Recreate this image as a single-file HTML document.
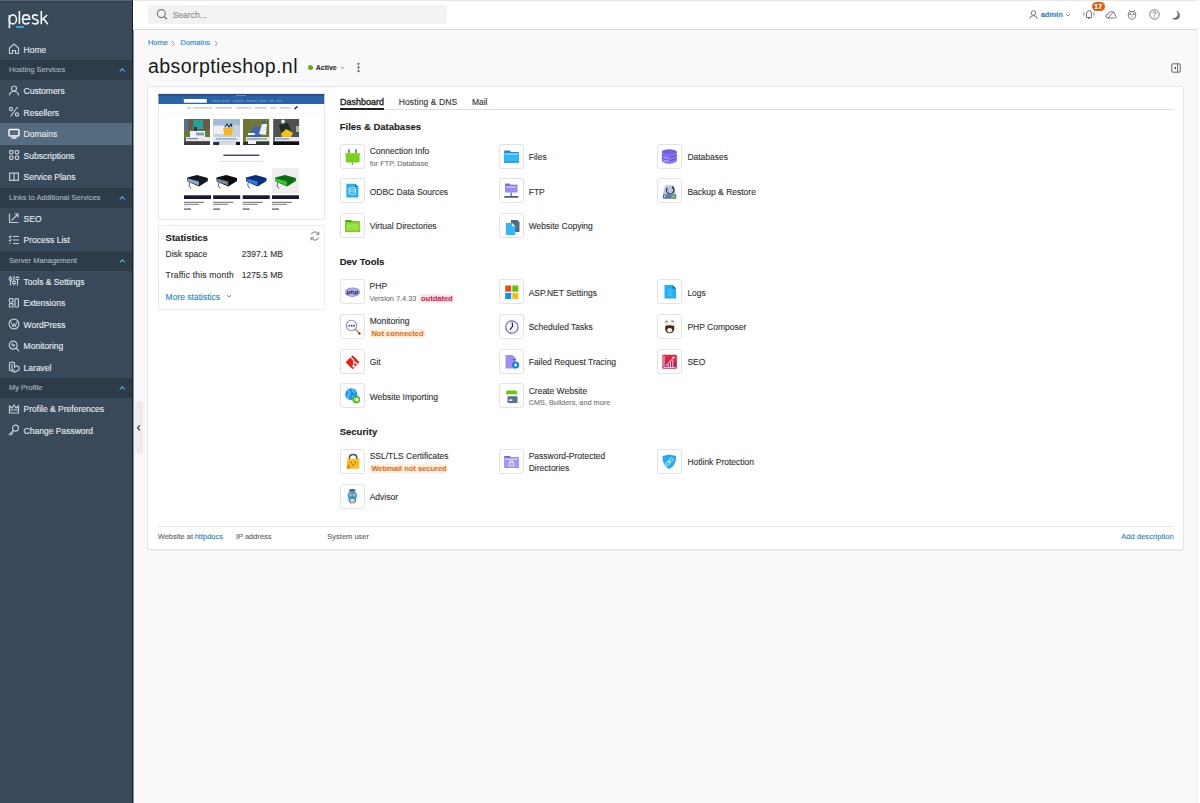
<!DOCTYPE html>
<html><head><meta charset="utf-8"><title>Plesk</title>
<style>
html,body{margin:0;padding:0;}
body{width:1200px;height:803px;overflow:hidden;position:relative;background:#f9f9f9;font-family:"Liberation Sans",sans-serif;}
.t{position:absolute;line-height:1;white-space:nowrap;-webkit-text-stroke:0.12px currentColor;}
.r{position:absolute;}
svg.r{overflow:visible;}
</style></head><body>
<div class="r" style="left:0px;top:0px;width:132px;height:803px;background:#384a5a"></div>
<div class="r" style="left:0px;top:0px;width:132px;height:1px;background:#55687a"></div>
<div class="r" style="left:132px;top:0px;width:1px;height:803px;background:#16222d"></div>
<div class="r" style="left:133px;top:0px;width:1px;height:803px;background:#8a939c"></div>
<div class="r" style="left:0px;top:1px;width:132px;height:1px;background:#2e3d4b"></div>
<svg class="r" style="left:0px;top:0px" width="60" height="32" viewBox="0 0 60 32"><g fill="none" stroke="#f4f6f8" stroke-width="1.6" stroke-linecap="butt"><path d="M9.4 15 V28.2"/><ellipse cx="12.9" cy="19.4" rx="3.6" ry="4.5"/><path d="M19.4 11 V24.2"/><path d="M22.6 19.3 H29.6 Q29.6 14.9 26.1 14.9 Q22.6 14.9 22.6 19.4 Q22.6 23.9 26.2 23.9 Q28.3 23.9 29.4 22.6"/><path d="M37.8 15.9 Q36.8 14.9 35 14.9 Q32.6 14.9 32.6 16.9 Q32.6 18.6 35.2 19.2 Q38.1 19.8 38.1 21.7 Q38.1 23.9 35.2 23.9 Q33.2 23.9 32.1 22.7"/><path d="M41.3 11 V24.2"/><path d="M47.2 15 L41.6 20.2 M43.4 18.6 L47.8 24.2"/></g></svg>
<div class="r" style="left:16px;top:26px;width:8px;height:1.6px;background:#36a9d8"></div>
<div class="t" style="left:23.60px;top:45.70px;font-size:8.5px;color:#e8ecef;">Home</div>
<div class="r" style="left:0px;top:60px;width:132px;height:20px;background:#2e3c4a"></div>
<div class="t" style="left:9.00px;top:66.45px;font-size:7.5px;color:#aab5bf;">Hosting Services</div>
<svg class="r" style="left:118.5px;top:68.3px" width="7" height="4" viewBox="0 0 7 4"><path d="M0.8 3.3 L3.3 0.9 L5.8 3.3" fill="none" stroke="#3fb5e6" stroke-width="1.15"/></svg>
<div class="t" style="left:23.60px;top:87.20px;font-size:8.5px;color:#e8ecef;">Customers</div>
<div class="t" style="left:23.60px;top:108.70px;font-size:8.5px;color:#e8ecef;">Resellers</div>
<div class="r" style="left:0px;top:123px;width:132px;height:21.5px;background:#556b80"></div>
<div class="t" style="left:23.60px;top:130.20px;font-size:8.5px;color:#e8ecef;">Domains</div>
<div class="t" style="left:23.60px;top:151.70px;font-size:8.5px;color:#e8ecef;">Subscriptions</div>
<div class="t" style="left:23.60px;top:173.20px;font-size:8.5px;color:#e8ecef;">Service Plans</div>
<div class="r" style="left:0px;top:187.5px;width:132px;height:20px;background:#2e3c4a"></div>
<div class="t" style="left:9.00px;top:193.95px;font-size:7.5px;color:#aab5bf;">Links to Additional Services</div>
<svg class="r" style="left:118.5px;top:195.8px" width="7" height="4" viewBox="0 0 7 4"><path d="M0.8 3.3 L3.3 0.9 L5.8 3.3" fill="none" stroke="#3fb5e6" stroke-width="1.15"/></svg>
<div class="t" style="left:23.60px;top:214.70px;font-size:8.5px;color:#e8ecef;">SEO</div>
<div class="t" style="left:23.60px;top:236.20px;font-size:8.5px;color:#e8ecef;">Process List</div>
<div class="r" style="left:0px;top:250.5px;width:132px;height:20px;background:#2e3c4a"></div>
<div class="t" style="left:9.00px;top:256.95px;font-size:7.5px;color:#aab5bf;">Server Management</div>
<svg class="r" style="left:118.5px;top:258.8px" width="7" height="4" viewBox="0 0 7 4"><path d="M0.8 3.3 L3.3 0.9 L5.8 3.3" fill="none" stroke="#3fb5e6" stroke-width="1.15"/></svg>
<div class="t" style="left:23.60px;top:277.70px;font-size:8.5px;color:#e8ecef;">Tools &amp; Settings</div>
<div class="t" style="left:23.60px;top:299.20px;font-size:8.5px;color:#e8ecef;">Extensions</div>
<div class="t" style="left:23.60px;top:320.70px;font-size:8.5px;color:#e8ecef;">WordPress</div>
<div class="t" style="left:23.60px;top:342.20px;font-size:8.5px;color:#e8ecef;">Monitoring</div>
<div class="t" style="left:23.60px;top:363.70px;font-size:8.5px;color:#e8ecef;">Laravel</div>
<div class="r" style="left:0px;top:378px;width:132px;height:20px;background:#2e3c4a"></div>
<div class="t" style="left:9.00px;top:384.45px;font-size:7.5px;color:#aab5bf;">My Profile</div>
<svg class="r" style="left:118.5px;top:386.3px" width="7" height="4" viewBox="0 0 7 4"><path d="M0.8 3.3 L3.3 0.9 L5.8 3.3" fill="none" stroke="#3fb5e6" stroke-width="1.15"/></svg>
<div class="t" style="left:23.60px;top:405.20px;font-size:8.5px;color:#e8ecef;">Profile &amp; Preferences</div>
<div class="t" style="left:23.60px;top:426.70px;font-size:8.5px;color:#e8ecef;">Change Password</div>
<svg class="r" style="left:8px;top:43.4px" width="12" height="12" viewBox="0 0 12 12"><path d="M1.5 10.5 V5 L6 1 L10.5 5 V10.5 H7.5 V7.5 H4.5 V10.5 Z" fill="none" stroke="#c3ccd4" stroke-width="1.2"/></svg>
<svg class="r" style="left:8px;top:84.9px" width="12" height="12" viewBox="0 0 12 12"><circle cx="6" cy="3.5" r="2.5" fill="none" stroke="#c3ccd4" stroke-width="1.2"/><path d="M1.5 10.5 Q1.5 6.5 6 6.5 Q10.5 6.5 10.5 10.5" fill="none" stroke="#c3ccd4" stroke-width="1.2"/></svg>
<svg class="r" style="left:8px;top:106.4px" width="12" height="12" viewBox="0 0 12 12"><circle cx="3" cy="3" r="1.6" fill="none" stroke="#c3ccd4" stroke-width="1.2"/><circle cx="9" cy="8.5" r="1.6" fill="none" stroke="#c3ccd4" stroke-width="1.2"/><path d="M9.5 1 L2.5 10.5" fill="none" stroke="#c3ccd4" stroke-width="1.2"/></svg>
<svg class="r" style="left:8px;top:127.9px" width="12" height="12" viewBox="0 0 12 12"><rect x="1" y="1.5" width="10" height="6.5" rx="1" fill="none" stroke="#ffffff" stroke-width="1.4"/><path d="M3.5 10 H8.5" stroke="#ffffff" stroke-width="1.4"/></svg>
<svg class="r" style="left:8px;top:149.4px" width="12" height="12" viewBox="0 0 12 12"><rect x="1.6" y="1.6" width="3.3" height="3.3" rx=".8" fill="none" stroke="#c3ccd4" stroke-width="1.2"/><rect x="7.3" y="1.6" width="3.3" height="3.3" rx=".8" fill="none" stroke="#c3ccd4" stroke-width="1.2"/><rect x="1.6" y="7.1" width="3.3" height="3.3" rx=".8" fill="none" stroke="#c3ccd4" stroke-width="1.2"/><rect x="7.3" y="7.1" width="3.3" height="3.3" rx=".8" fill="none" stroke="#c3ccd4" stroke-width="1.2"/></svg>
<svg class="r" style="left:8px;top:170.9px" width="12" height="12" viewBox="0 0 12 12"><path d="M1.6 2.2 H5.4 Q6 2.2 6 2.8 V10 Q6 9.4 5.4 9.4 H1.6 Z M10.4 2.2 H6.6 Q6 2.2 6 2.8 V10 Q6 9.4 6.6 9.4 H10.4 Z" fill="none" stroke="#c3ccd4" stroke-width="1.2"/></svg>
<svg class="r" style="left:8px;top:212.4px" width="12" height="12" viewBox="0 0 12 12"><path d="M1.5 1.5 V10.5 H10.5" fill="none" stroke="#c3ccd4" stroke-width="1.2"/><path d="M3.5 8.5 L10 2 M6.5 2 H10 V5.5" fill="none" stroke="#c3ccd4" stroke-width="1.2"/></svg>
<svg class="r" style="left:8px;top:233.9px" width="12" height="12" viewBox="0 0 12 12"><path d="M1 2.5 L2 3.5 L3.5 1.5 M1 6 L2 7 L3.5 5 M1.5 9.5 H2.5 M5 2.5 H11 M5 6 H11 M5 9.5 H11" fill="none" stroke="#c3ccd4" stroke-width="1.2"/></svg>
<svg class="r" style="left:8px;top:275.4px" width="12" height="12" viewBox="0 0 12 12"><path d="M2.5 1 V10.5 M6 1 V10.5 M9.5 1 V10.5" fill="none" stroke="#c3ccd4" stroke-width="1.2"/><rect x="1.2" y="3" width="2.6" height="2" fill="#384a5a" stroke="#c9d1d8"/><rect x="4.7" y="6.5" width="2.6" height="2" fill="#384a5a" stroke="#c9d1d8"/><rect x="8.2" y="2.5" width="2.6" height="2" fill="#384a5a" stroke="#c9d1d8"/></svg>
<svg class="r" style="left:8px;top:296.9px" width="12" height="12" viewBox="0 0 12 12"><rect x="1.4" y="1.6" width="3.6" height="3.4" rx=".6" fill="none" stroke="#c3ccd4" stroke-width="1.2"/><rect x="1.4" y="6.6" width="3.6" height="3.4" rx=".6" fill="none" stroke="#c3ccd4" stroke-width="1.2"/><rect x="7" y="1.6" width="3.4" height="8.4" rx="1" fill="none" stroke="#c3ccd4" stroke-width="1.2"/></svg>
<svg class="r" style="left:8px;top:318.4px" width="12" height="12" viewBox="0 0 12 12"><circle cx="6" cy="6" r="4.9" fill="none" stroke="#c3ccd4" stroke-width="1.2"/><path d="M3.2 3.6 L5 8.8 L6.1 5.6 L7.2 8.8 L8.9 3.6" fill="none" stroke="#c3ccd4" stroke-width="1"/></svg>
<svg class="r" style="left:8px;top:339.9px" width="12" height="12" viewBox="0 0 12 12"><circle cx="5.2" cy="5.2" r="4" fill="none" stroke="#c3ccd4" stroke-width="1.2"/><path d="M8 8 L11 11" fill="none" stroke="#c3ccd4" stroke-width="1.2"/><path d="M3.5 5.5 L4.5 4 L5.5 6 L6.8 4.5" fill="none" stroke="#c3ccd4" stroke-width="1.2"/></svg>
<svg class="r" style="left:8px;top:361.4px" width="12" height="12" viewBox="0 0 12 12"><path d="M1.5 2 L4 1 L6.5 2 V6 L9 5 L11 6 V9 L6.5 11 L1.5 9 Z M4 3 V8 L6.5 9.5" fill="none" stroke="#c3ccd4" stroke-width="1.2"/></svg>
<svg class="r" style="left:8px;top:402.9px" width="12" height="12" viewBox="0 0 12 12"><path d="M1.5 3 L4 5 L6 2 L8 5 L10.5 3 V10 H1.5 Z M1.5 7 H10.5" fill="none" stroke="#c3ccd4" stroke-width="1.2"/></svg>
<svg class="r" style="left:8px;top:424.4px" width="12" height="12" viewBox="0 0 12 12"><circle cx="7.5" cy="4.2" r="3" fill="none" stroke="#c3ccd4" stroke-width="1.2"/><path d="M5.5 6.5 L1 11 M2.5 9.5 L4 11 M3.8 8.2 L5 9.5" fill="none" stroke="#c3ccd4" stroke-width="1.2"/></svg>
<div class="r" style="left:135px;top:401px;width:8px;height:53px;background:#ececec;border-radius:2px"></div>
<svg class="r" style="left:135px;top:423px" width="8" height="10" viewBox="0 0 8 10"><path d="M4.9 2.3 L2.6 4.8 L4.9 7.3" fill="none" stroke="#333" stroke-width="1.2"/></svg>
<div class="r" style="left:133px;top:0px;width:1067px;height:29px;background:#ffffff"></div>
<div class="r" style="left:133px;top:0px;width:1067px;height:1px;background:#e9e9e9"></div>
<div class="r" style="left:133px;top:29px;width:1065px;height:1px;background:#d9d9d9"></div>
<div class="r" style="left:1198px;top:0px;width:2px;height:803px;background:#ffffff"></div>
<div class="r" style="left:1196px;top:30px;width:1px;height:773px;background:#f3f3f3"></div>
<div class="r" style="left:148px;top:5px;width:299px;height:19px;background:#f2f2f2;border-radius:2px"></div>
<svg class="r" style="left:155px;top:8px" width="14" height="13" viewBox="0 0 14 13"><circle cx="6.3" cy="5.6" r="4" fill="none" stroke="#777" stroke-width="1.1"/><path d="M9.2 8.5 L12 11.3" stroke="#777" stroke-width="1.4"/></svg>
<div class="t" style="left:172.70px;top:10.80px;font-size:8.5px;color:#8a8a8a;">Search...</div>
<svg class="r" style="left:1029px;top:9.5px" width="9" height="9" viewBox="0 0 9 9"><circle cx="4.5" cy="3" r="2.2" fill="none" stroke="#777" stroke-width="1"/><path d="M0.8 8.8 Q0.8 5.6 4.5 5.6 Q8.2 5.6 8.2 8.8" fill="none" stroke="#777" stroke-width="1"/></svg>
<div class="t" style="left:1040.70px;top:10.95px;font-size:7.5px;color:#1e88c7;font-weight:bold;">admin</div>
<svg class="r" style="left:1065px;top:13px" width="6" height="4" viewBox="0 0 6 4"><path d="M1 1 L3 3 L5 1" fill="none" stroke="#888" stroke-width="1"/></svg>
<svg class="r" style="left:1083px;top:9px" width="12" height="10" viewBox="0 0 12 10"><path d="M3.5 8.5 V5 Q3.5 1.5 6 1.5 Q8.5 1.5 8.5 5 V8.5 Z M5 9.3 H7 M1 3.5 V6.5 M11 3.5 V6.5" fill="none" stroke="#777" stroke-width="1"/></svg>
<div class="r" style="left:1092px;top:1.5px;width:12.5px;height:9.5px;background:#dc6211;border-radius:5px"></div>
<div class="t" style="left:1093.20px;top:3.37px;font-size:7px;color:#ffffff;font-weight:bold;width:10px;text-align:center;">17</div>
<svg class="r" style="left:1105px;top:10px" width="12" height="9" viewBox="0 0 12 9"><path d="M3 8 Q0.7 8 0.8 6 Q1 4.3 3 4.5 Q3.8 1.3 6.8 1.5 Q9.8 1.8 10 5 Q11.5 5.5 11.2 7 Q11 8 9.5 8 Z M3 8 L8.5 1.8" fill="none" stroke="#777" stroke-width="1"/></svg>
<svg class="r" style="left:1127px;top:9px" width="10" height="11" viewBox="0 0 10 11"><path d="M2 1 L3.5 2.5 H6.5 L8 1 M1.2 5 Q1.2 2.5 5 2.5 Q8.8 2.5 8.8 5 Q8.8 10.2 5 10.2 Q1.2 10.2 1.2 5 Z" fill="none" stroke="#777" stroke-width="1"/><circle cx="3.4" cy="5.2" r="1" fill="#777"/><circle cx="6.6" cy="5.2" r="1" fill="#777"/><path d="M5 6.5 V8" stroke="#777"/></svg>
<svg class="r" style="left:1148.5px;top:9.2px" width="11" height="11" viewBox="0 0 11 11"><circle cx="5.5" cy="5.5" r="4.7" fill="none" stroke="#777" stroke-width="1"/><path d="M4 4.3 Q4 2.8 5.5 2.8 Q7 2.8 7 4.2 Q7 5.2 5.5 5.7 V6.5" fill="none" stroke="#777" stroke-width="0.9"/><circle cx="5.5" cy="8" r=".6" fill="#777"/></svg>
<svg class="r" style="left:1171px;top:9.5px" width="10" height="10" viewBox="0 0 10 10"><path d="M5.2 0.6 Q9.3 2.4 8.9 6.2 Q8.3 9.6 4.6 9.7 Q2.3 9.7 1 8.2 Q4.8 8.6 6.4 5.8 Q7.6 3.2 5.2 0.6 Z" fill="#777"/></svg>
<div class="t" style="left:147.90px;top:39.45px;font-size:7.5px;color:#1e88c7;">Home</div>
<svg class="r" style="left:171px;top:39.5px" width="5" height="7" viewBox="0 0 5 7"><path d="M1 1 L3.5 3.5 L1 6" fill="none" stroke="#999" stroke-width="0.9"/></svg>
<div class="t" style="left:180.50px;top:39.45px;font-size:7.5px;color:#1e88c7;">Domains</div>
<svg class="r" style="left:214px;top:39.5px" width="5" height="7" viewBox="0 0 5 7"><path d="M1 1 L3.5 3.5 L1 6" fill="none" stroke="#999" stroke-width="0.9"/></svg>
<div class="t" style="left:148.00px;top:56.81px;font-size:19.6px;color:#1a1a1a;letter-spacing:0.38px;-webkit-text-stroke:0;">absorptieshop.nl</div>
<div class="r" style="left:308.3px;top:64.7px;width:5px;height:5px;border-radius:50%;background:#5fae1e"></div>
<div class="t" style="left:315.70px;top:63.77px;font-size:7px;color:#333;font-weight:bold;">Active</div>
<svg class="r" style="left:340px;top:65.5px" width="5" height="4" viewBox="0 0 5 4"><path d="M1 1 L2.5 2.5 L4 1" fill="none" stroke="#888" stroke-width="0.9"/></svg>
<svg class="r" style="left:355px;top:62px" width="7" height="11" viewBox="0 0 7 11"><path d="M3.5 1.5 V9.5" stroke="#aaa" stroke-width="0.6"/><circle cx="3.5" cy="1.8" r="1.15" fill="#666"/><circle cx="3.5" cy="5.5" r="1.15" fill="#666"/><circle cx="3.5" cy="9.2" r="1.15" fill="#666"/></svg>
<svg class="r" style="left:1170.5px;top:62.5px" width="11" height="11" viewBox="0 0 11 11"><rect x="0.8" y="0.8" width="8.4" height="8.4" rx="1.2" fill="#fff" stroke="#555" stroke-width="0.9"/><path d="M6.6 0.8 V9.2" stroke="#555" stroke-width="0.9"/><path d="M4.8 3.4 L2.9 5 L4.8 6.6 Z" fill="#333"/></svg>
<div class="r" style="left:147px;top:85.5px;width:1035px;height:462px;background:#fff;border:1px solid #e6e6e6;border-radius:3px;box-shadow:0 1px 1px rgba(0,0,0,0.06)"></div>
<div class="r" style="left:157.5px;top:93px;width:167.5px;height:126.5px;background:#fff;border:1px solid #e8e8e8;box-sizing:border-box"></div>
<svg class="r" style="left:157px;top:93px;filter:blur(0.3px)" width="169" height="127" viewBox="157 93 169 127"><rect x="158.5" y="94" width="165.7" height="10" fill="#2a62a6"/><rect x="158.5" y="94" width="165.7" height="1.6" fill="#244f86"/><rect x="183.8" y="99" width="23" height="3.8" rx="0.6" fill="#ffffff"/><rect x="236" y="95.3" width="10" height="0.7" fill="#7fa0c8"/><rect x="212" y="100.6" width="9" height="0.8" fill="#8fb0d6"/><rect x="222" y="100.6" width="8" height="0.8" fill="#8fb0d6"/><rect x="233" y="100.6" width="11" height="0.8" fill="#8fb0d6"/><rect x="246" y="100.6" width="11" height="0.8" fill="#8fb0d6"/><rect x="259" y="100.6" width="8" height="0.8" fill="#8fb0d6"/><rect x="269" y="100.6" width="5" height="0.8" fill="#8fb0d6"/><rect x="276" y="100.6" width="6" height="0.8" fill="#8fb0d6"/><rect x="187" y="107.4" width="4" height="1" fill="#b5b5b5"/><rect x="193" y="107.4" width="19" height="1" fill="#b5b5b5"/><rect x="215.5" y="107.4" width="16.5" height="1" fill="#b5b5b5"/><rect x="236.5" y="107.4" width="15" height="1" fill="#b5b5b5"/><rect x="254.5" y="107.4" width="12.5" height="1" fill="#b5b5b5"/><rect x="270.5" y="107.4" width="6" height="1" fill="#b5b5b5"/><rect x="279.5" y="107.4" width="11" height="1" fill="#b5b5b5"/><path d="M294.5 109 L297.5 106.5" stroke="#222" stroke-width="1.6"/><rect x="161" y="113.3" width="160" height="0.5" fill="#f0f0f0"/><rect x="184" y="119" width="26" height="26" fill="#6b5845"/><rect x="184" y="119" width="4" height="13" fill="#58708a"/><rect x="193" y="120" width="10" height="9" fill="#22a39b"/><rect x="184" y="130" width="26" height="8" fill="#5f7d3a"/><rect x="194" y="127" width="3" height="4" fill="#2b3352"/><rect x="190" y="131" width="15" height="9" fill="#f1f3f6"/><rect x="196" y="132.5" width="8" height="3" fill="#8a9cc0"/><rect x="186" y="137" width="24" height="4" fill="#e4e8ee"/><rect x="187" y="138" width="11" height="1.2" fill="#6d8fc0"/><rect x="184" y="142" width="26" height="3" fill="#3b3d3f"/><rect x="213.2" y="119" width="26.8" height="26" fill="#c4d3e2"/><rect x="213.2" y="119" width="26.8" height="6" fill="#9fbbd8"/><rect x="214" y="126" width="10" height="8" fill="#eef0f2"/><path d="M223 128 H233 L231.5 135.5 H224.5 Z" fill="#f3b61e"/><path d="M225 127 L227 124 L229 127 L231 124 L232 127" stroke="#333" stroke-width="1.2" fill="none"/><rect x="213.2" y="137" width="26.8" height="4" fill="#e8ebef"/><rect x="216" y="138.3" width="21" height="1.2" fill="#7f9cc8"/><rect x="213.2" y="142" width="26.8" height="3" fill="#d7d9dc"/><rect x="213.2" y="142" width="6" height="3" fill="#1f3047"/><rect x="236" y="142" width="4" height="3" fill="#111"/><rect x="243" y="119" width="26.2" height="26" fill="#707633"/><path d="M249 141 L252 128 Q256 125 262 127 L260 137 Z" fill="#3e63b3"/><rect x="262" y="121" width="3" height="2.5" fill="#2a5fbf"/><path d="M262 124 L267 124 L266 135 L259 134 Z" fill="#eef2ee"/><rect x="248" y="133" width="7" height="2" fill="#f5f5f5"/><rect x="246" y="137" width="23.2" height="4" fill="#e6eaf0"/><rect x="247" y="138.3" width="20" height="1.2" fill="#6d8fc0"/><rect x="243" y="142" width="26.2" height="3" fill="#2b3a2a"/><rect x="248" y="141" width="8" height="3" fill="#f2f2f2"/><rect x="273.2" y="119" width="25.9" height="26" fill="#505050"/><circle cx="283" cy="121.5" r="2" fill="#d8e8d2"/><path d="M279 125 L288 123 L291 130 L281 132 Z" fill="#202a28"/><path d="M281 134 L286 129 L293 133 L291 137 H282 Z" fill="#f1c31a"/><rect x="296" y="126" width="3" height="6" fill="#9fb89a"/><rect x="275" y="137" width="24.1" height="4" fill="#e5e8ec"/><rect x="276" y="138.3" width="13" height="1.2" fill="#6d8fc0"/><rect x="273.2" y="142" width="25.9" height="3" fill="#101010"/><rect x="223.4" y="154.6" width="36" height="1.3" fill="#2f3549"/><rect x="220" y="160.9" width="43" height="0.6" fill="#c8c8c8"/><rect x="272" y="168" width="27" height="25.5" fill="#eeeeee"/><g transform="translate(0,0)"><path d="M187.2 177.5 L197 175 L207.8 178 L207.8 181 L199 186.5 L187.5 181.5 Z" fill="#14181f"/><path d="M188 178.5 L199 181.5 L199 185.5 L188 181.5 Z" fill="#9cc3ea" opacity="0.85"/><path d="M189.5 182.5 Q188 186 191 188.5" stroke="#333" stroke-width="0.8" fill="none"/></g><rect x="184" y="195.3" width="27" height="3.7" fill="#14183e"/><rect x="184" y="201.8" width="20" height="1" fill="#666"/><rect x="184" y="203.8" width="15" height="1" fill="#777"/><rect x="184" y="206.5" width="6" height="0.5" fill="#ccc"/><rect x="184" y="208.5" width="7" height="1.2" fill="#555"/><g transform="translate(29.19999999999999,0)"><path d="M187.2 177.5 L197 175 L207.8 178 L207.8 181 L199 186.5 L187.5 181.5 Z" fill="#0b0c0e"/><path d="M188 178.5 L199 181.5 L199 185.5 L188 181.5 Z" fill="#7f9fb8" opacity="0.85"/><path d="M189.5 182.5 Q188 186 191 188.5" stroke="#333" stroke-width="0.8" fill="none"/></g><rect x="213.2" y="195.3" width="27.0" height="3.7" fill="#14183e"/><rect x="213.2" y="201.8" width="20" height="1" fill="#666"/><rect x="213.2" y="203.8" width="15" height="1" fill="#777"/><rect x="213.2" y="206.5" width="6" height="0.5" fill="#ccc"/><rect x="213.2" y="208.5" width="7" height="1.2" fill="#555"/><g transform="translate(58.69999999999999,0)"><path d="M187.2 177.5 L197 175 L207.8 178 L207.8 181 L199 186.5 L187.5 181.5 Z" fill="#0a2f7a"/><path d="M188 178.5 L199 181.5 L199 185.5 L188 181.5 Z" fill="#3a86e8" opacity="0.85"/><path d="M189.5 182.5 Q188 186 191 188.5" stroke="#333" stroke-width="0.8" fill="none"/></g><rect x="242.7" y="195.3" width="27.0" height="3.7" fill="#14183e"/><rect x="242.7" y="201.8" width="20" height="1" fill="#666"/><rect x="242.7" y="203.8" width="15" height="1" fill="#777"/><rect x="242.7" y="206.5" width="6" height="0.5" fill="#ccc"/><rect x="242.7" y="208.5" width="7" height="1.2" fill="#555"/><g transform="translate(88,0)"><path d="M187.2 177.5 L197 175 L207.8 178 L207.8 181 L199 186.5 L187.5 181.5 Z" fill="#0d6b14"/><path d="M188 178.5 L199 181.5 L199 185.5 L188 181.5 Z" fill="#45d23a" opacity="0.85"/><path d="M189.5 182.5 Q188 186 191 188.5" stroke="#333" stroke-width="0.8" fill="none"/></g><rect x="272" y="195.3" width="27" height="3.7" fill="#14183e"/><rect x="272" y="201.8" width="20" height="1" fill="#666"/><rect x="272" y="203.8" width="15" height="1" fill="#777"/><rect x="272" y="206.5" width="6" height="0.5" fill="#ccc"/><rect x="272" y="208.5" width="7" height="1.2" fill="#555"/></svg>
<div class="r" style="left:158px;top:224.5px;width:166.6px;height:85.5px;background:#fff;border:1px solid #ececec;box-sizing:border-box;border-radius:2px"></div>
<div class="t" style="left:165.60px;top:232.66px;font-size:9.5px;color:#222;font-weight:bold;">Statistics</div>
<svg class="r" style="left:308.5px;top:229.5px" width="12" height="12" viewBox="0 0 12 12"><path d="M9.5 4 A4 4 0 0 0 2.2 4.5 M2.5 8 A4 4 0 0 0 9.8 7.5" fill="none" stroke="#777" stroke-width="1"/><path d="M9.8 1.8 V4.3 H7.3 M2.2 10.2 V7.7 H4.7" fill="none" stroke="#777" stroke-width="1"/></svg>
<div class="t" style="left:165.60px;top:250.20px;font-size:8.5px;color:#333;">Disk space</div>
<div class="t" style="left:241.80px;top:250.20px;font-size:8.5px;color:#333;">2397.1 MB</div>
<div class="t" style="left:165.60px;top:270.90px;font-size:8.5px;color:#333;letter-spacing:0.2px;">Traffic this month</div>
<div class="t" style="left:241.80px;top:270.90px;font-size:8.5px;color:#333;">1275.5 MB</div>
<div class="t" style="left:165.60px;top:292.60px;font-size:8.5px;color:#1e88c7;">More statistics</div>
<svg class="r" style="left:226px;top:294px" width="6" height="4" viewBox="0 0 6 4"><path d="M1 1 L3 3 L5 1" fill="none" stroke="#777" stroke-width="0.9"/></svg>
<div class="r" style="left:339.5px;top:109px;width:834.5px;height:1px;background:#dcdcdc"></div>
<div class="r" style="left:339.5px;top:108.3px;width:44.5px;height:2px;background:#222"></div>
<div class="t" style="left:339.90px;top:98.08px;font-size:9px;color:#222;-webkit-text-stroke:0.35px #222;">Dashboard</div>
<div class="t" style="left:398.80px;top:98.20px;font-size:8.5px;color:#333;letter-spacing:0.1px;">Hosting &amp; DNS</div>
<div class="t" style="left:471.90px;top:98.20px;font-size:8.5px;color:#333;">Mail</div>
<div class="t" style="left:339.70px;top:121.56px;font-size:9.5px;color:#222;font-weight:bold;">Files &amp; Databases</div>
<div class="r" style="left:339.5px;top:143.7px;width:25px;height:25px;box-sizing:border-box;border:1px solid #e3e3e3;border-radius:3px;background:#fff"></div>
<svg class="r" style="left:339.5px;top:143.7px" width="25" height="25" viewBox="0 0 25 25"><path d="M9 5.2 V9.5 M16 5.2 V9.5" stroke="#5a6aa8" stroke-width="1.5"/><path d="M12.4 17.5 V20.8" stroke="#6f7fb5" stroke-width="1.3"/><path d="M5.2 9 H20.2 L19.6 11.5 L19.6 17.5 Q19.5 18.6 18 18.6 H7.3 Q5.8 18.6 5.8 17.5 V11.5 Z" fill="#79d21a"/><path d="M5.2 9 H20.2 V10.3 H5.2 Z" fill="#8de52a"/></svg>
<div class="t" style="left:369.70px;top:147.10px;font-size:8.5px;color:#333;">Connection Info</div>
<div class="t" style="left:369.70px;top:159.52px;font-size:7.3px;color:#777;">for FTP, Database</div>
<div class="r" style="left:498.5px;top:143.7px;width:25px;height:25px;box-sizing:border-box;border:1px solid #e3e3e3;border-radius:3px;background:#fff"></div>
<svg class="r" style="left:498.5px;top:143.7px" width="25" height="25" viewBox="0 0 25 25"><path d="M5.2 6.4 H10.8 L12 7.9 H19.7 V18.6 H5.2 Z" fill="#1a86ef"/><rect x="5.2" y="9" width="14.5" height="9.6" fill="#34b6f5"/><rect x="6.3" y="9.5" width="12.3" height="1" fill="#bfe8ff"/><rect x="5.2" y="17.4" width="14.5" height="1.2" fill="#1a9be8"/></svg>
<div class="t" style="left:528.70px;top:152.90px;font-size:8.5px;color:#333;">Files</div>
<div class="r" style="left:657.2px;top:143.7px;width:25px;height:25px;box-sizing:border-box;border:1px solid #e3e3e3;border-radius:3px;background:#fff"></div>
<svg class="r" style="left:657.2px;top:143.7px" width="25" height="25" viewBox="0 0 25 25"><path d="M4.9 7.8 V17.6 Q12.3 22.2 19.8 17.6 V7.8 Z" fill="#8b78ef"/><ellipse cx="12.3" cy="7.8" rx="7.5" ry="2.6" fill="#7560e4"/><path d="M4.9 11.3 Q12.3 15 19.8 11.3 M4.9 14.6 Q12.3 18.3 19.8 14.6" fill="none" stroke="#6a52dc" stroke-width="1.1"/><path d="M6.5 12.6 Q9 13.6 12 13.8 M6.5 15.9 Q9 16.9 12 17.1 M6.5 19 Q9 19.9 12 20" fill="none" stroke="#c9c0ff" stroke-width="0.9"/></svg>
<div class="t" style="left:687.40px;top:152.90px;font-size:8.5px;color:#333;">Databases</div>
<div class="r" style="left:339.5px;top:178.3px;width:25px;height:25px;box-sizing:border-box;border:1px solid #e3e3e3;border-radius:3px;background:#fff"></div>
<svg class="r" style="left:339.5px;top:178.3px" width="25" height="25" viewBox="0 0 25 25"><path d="M6.4 5.7 H15 L18.4 9 V19.6 H6.4 Z" fill="#27aef0"/><path d="M15 5.7 V9 H18.4 Z" fill="#0f7fd6"/><ellipse cx="12.3" cy="10.6" rx="3.2" ry="1.2" fill="none" stroke="#cfefff" stroke-width="0.9"/><path d="M9.1 10.6 V15.8 Q12.3 17.6 15.5 15.8 V10.6 M9.1 13.2 Q12.3 15 15.5 13.2" fill="none" stroke="#cfefff" stroke-width="0.9"/></svg>
<div class="t" style="left:369.70px;top:187.50px;font-size:8.5px;color:#333;">ODBC Data Sources</div>
<div class="r" style="left:498.5px;top:178.3px;width:25px;height:25px;box-sizing:border-box;border:1px solid #e3e3e3;border-radius:3px;background:#fff"></div>
<svg class="r" style="left:498.5px;top:178.3px" width="25" height="25" viewBox="0 0 25 25"><path d="M6 5.5 H10.5 L11.6 6.8 H18.3 V14.2 H6 Z" fill="#7b64e8"/><rect x="6" y="7.8" width="12.3" height="6.4" fill="#9b8bf5"/><rect x="7.3" y="8.5" width="9.5" height="1" fill="#e6e1ff"/><path d="M12.2 14.2 V18.5" stroke="#6f8596" stroke-width="1.5"/><rect x="5.3" y="18" width="14" height="1.8" fill="#4f6778"/></svg>
<div class="t" style="left:528.70px;top:187.50px;font-size:8.5px;color:#333;">FTP</div>
<div class="r" style="left:657.2px;top:178.3px;width:25px;height:25px;box-sizing:border-box;border:1px solid #e3e3e3;border-radius:3px;background:#fff"></div>
<svg class="r" style="left:657.2px;top:178.3px" width="25" height="25" viewBox="0 0 25 25"><path d="M8.2 7.3 H16.8 L19.2 16.2 H5.8 Z" fill="#b9c8de"/><path d="M15.6 9.6 A3.6 3.6 0 1 1 10.4 10" fill="none" stroke="#333d4a" stroke-width="1.3"/><circle cx="15.8" cy="9.5" r=".9" fill="#222"/><rect x="5.8" y="16.2" width="13.5" height="4.5" rx="0.8" fill="#5676a8"/><rect x="14.2" y="17.6" width="4" height="1.8" fill="#84e01c"/><rect x="7" y="17.6" width="1.4" height="1.6" fill="#ddeeff"/></svg>
<div class="t" style="left:687.40px;top:187.50px;font-size:8.5px;color:#333;">Backup &amp; Restore</div>
<div class="r" style="left:339.5px;top:213px;width:25px;height:25px;box-sizing:border-box;border:1px solid #e3e3e3;border-radius:3px;background:#fff"></div>
<svg class="r" style="left:339.5px;top:213px" width="25" height="25" viewBox="0 0 25 25"><path d="M5.2 6.9 H10.8 L12 8.3 H19.7 V18.9 H5.2 Z" fill="#49ab0a"/><rect x="5.2" y="9" width="14.5" height="9.9" fill="#7cd322"/><rect x="6.5" y="10.5" width="12" height="7" fill="#9be046"/></svg>
<div class="t" style="left:369.70px;top:222.20px;font-size:8.5px;color:#333;">Virtual Directories</div>
<div class="r" style="left:498.5px;top:213px;width:25px;height:25px;box-sizing:border-box;border:1px solid #e3e3e3;border-radius:3px;background:#fff"></div>
<svg class="r" style="left:498.5px;top:213px" width="25" height="25" viewBox="0 0 25 25"><path d="M12 7 H18.5 L20.5 9.2 V19 H12 Z" fill="#4f6a85"/><path d="M7 10 H13 L16.3 13.3 V22 H7 Z" fill="#30b8f5"/><path d="M13 10 L16.3 13.3 H13 Z" fill="#e8f7ff"/></svg>
<div class="t" style="left:528.70px;top:222.20px;font-size:8.5px;color:#333;">Website Copying</div>
<div class="t" style="left:339.70px;top:257.06px;font-size:9.5px;color:#222;font-weight:bold;">Dev Tools</div>
<div class="r" style="left:339.5px;top:279.3px;width:25px;height:25px;box-sizing:border-box;border:1px solid #e3e3e3;border-radius:3px;background:#fff"></div>
<svg class="r" style="left:339.5px;top:279.3px" width="25" height="25" viewBox="0 0 25 25"><ellipse cx="12.5" cy="13.2" rx="7.4" ry="4.8" fill="#8a93e8"/><ellipse cx="12.5" cy="13.2" rx="6" ry="3.6" fill="#b0b6f2"/><text x="12.5" y="15.3" font-family="Liberation Sans" font-weight="bold" font-style="italic" font-size="6.2" text-anchor="middle" fill="#1b1b2a">php</text></svg>
<div class="t" style="left:369.60px;top:281.80px;font-size:8.5px;color:#333;">PHP</div>
<div class="r" style="left:498.5px;top:279.3px;width:25px;height:25px;box-sizing:border-box;border:1px solid #e3e3e3;border-radius:3px;background:#fff"></div>
<svg class="r" style="left:498.5px;top:279.3px" width="25" height="25" viewBox="0 0 25 25"><rect x="6.2" y="6.5" width="6" height="6.2" fill="#ef4a18"/><rect x="13.3" y="6.5" width="6" height="6.2" fill="#68bd0c"/><rect x="6.2" y="13.9" width="6" height="6.2" fill="#0d98ee"/><rect x="13.3" y="13.9" width="6" height="6.2" fill="#fbbd0c"/></svg>
<div class="t" style="left:528.70px;top:288.50px;font-size:8.5px;color:#333;">ASP.NET Settings</div>
<div class="r" style="left:657.2px;top:279.3px;width:25px;height:25px;box-sizing:border-box;border:1px solid #e3e3e3;border-radius:3px;background:#fff"></div>
<svg class="r" style="left:657.2px;top:279.3px" width="25" height="25" viewBox="0 0 25 25"><path d="M7.5 6 H15.5 L19 9.5 V19.5 H7.5 Z" fill="#21b1f4"/><path d="M15.5 9.5 V6 L19 9.5 Z" fill="#0a66c9"/><path d="M10.5 10.8 H14 M11.5 12.7 H15.5 M11.5 14.6 H15.5 M11 16.4 H15" stroke="#7fd6ff" stroke-width="0.6"/></svg>
<div class="t" style="left:687.40px;top:288.50px;font-size:8.5px;color:#333;">Logs</div>
<div class="r" style="left:339.5px;top:314px;width:25px;height:25px;box-sizing:border-box;border:1px solid #e3e3e3;border-radius:3px;background:#fff"></div>
<svg class="r" style="left:339.5px;top:314px" width="25" height="25" viewBox="0 0 25 25"><circle cx="11.5" cy="11.5" r="5.2" fill="#f6f9ff" stroke="#8793ac" stroke-width="1.1"/><circle cx="9.3" cy="11.7" r=".9" fill="#2d4470"/><circle cx="11.7" cy="11.7" r=".9" fill="#2d4470"/><circle cx="14.1" cy="11.7" r=".9" fill="#2d4470"/><path d="M15.3 15.3 L19.5 19.5" stroke="#c97b3b" stroke-width="1.3"/><circle cx="19.5" cy="19.5" r="1.1" fill="#5c1a05"/></svg>
<div class="t" style="left:369.70px;top:317.20px;font-size:8.5px;color:#333;">Monitoring</div>
<div class="r" style="left:369.6px;top:328.7px;width:55.3px;height:9px;background:#fdf0e3;border-radius:1px"></div>
<div class="t" style="left:371.40px;top:329.55px;font-size:7.5px;color:#e0701a;font-weight:bold;">Not connected</div>
<div class="r" style="left:498.5px;top:314px;width:25px;height:25px;box-sizing:border-box;border:1px solid #e3e3e3;border-radius:3px;background:#fff"></div>
<svg class="r" style="left:498.5px;top:314px" width="25" height="25" viewBox="0 0 25 25"><circle cx="12.9" cy="13" r="6.2" fill="#f7f8ff" stroke="#7e67e6" stroke-width="1.3"/><path d="M13.2 8.5 L13.6 12.4 L11 15.6" stroke="#1f2440" stroke-width="1.2" fill="none"/></svg>
<div class="t" style="left:528.70px;top:323.20px;font-size:8.5px;color:#333;">Scheduled Tasks</div>
<div class="r" style="left:657.2px;top:314px;width:25px;height:25px;box-sizing:border-box;border:1px solid #e3e3e3;border-radius:3px;background:#fff"></div>
<svg class="r" style="left:657.2px;top:314px" width="25" height="25" viewBox="0 0 25 25"><path d="M8 9 L9.5 7 L11 8.5 M14 7.5 L15.5 6.8 L17 8.5" stroke="#9a8f86" stroke-width="1.3" fill="none"/><path d="M8 8.5 Q9.5 8 11 9 L13 10.2 L15 8.5 Q16.5 8.2 17.5 10 L17.5 14 Q17 18.8 12.7 18.8 Q8.4 18.8 8 14.5 Z" fill="#f4ebe4"/><path d="M8.3 12 Q12.5 10.4 17.2 12 L17.2 15.2 Q16.6 19.3 12.7 19.3 Q8.6 19.3 8.3 15.2 Z" fill="#4a2414"/><ellipse cx="12.7" cy="16.3" rx="2.6" ry="2.2" fill="#f6efe6"/></svg>
<div class="t" style="left:687.40px;top:323.20px;font-size:8.5px;color:#333;">PHP Composer</div>
<div class="r" style="left:339.5px;top:348.7px;width:25px;height:25px;box-sizing:border-box;border:1px solid #e3e3e3;border-radius:3px;background:#fff"></div>
<svg class="r" style="left:339.5px;top:348.7px" width="25" height="25" viewBox="0 0 25 25"><path d="M12.6 6.2 L19.5 13.2 L12.6 20.2 L5.6 13.2 Z" fill="#ee1b10"/><path d="M10.5 7.8 L13.6 11 V17.5 M13.2 11.4 L16.4 14.5" stroke="#fff" stroke-width="1.1" fill="none"/><circle cx="13.6" cy="17.3" r="1.2" fill="#fff"/><circle cx="16.4" cy="14.5" r="1.1" fill="#fff"/></svg>
<div class="t" style="left:369.70px;top:357.90px;font-size:8.5px;color:#333;">Git</div>
<div class="r" style="left:498.5px;top:348.7px;width:25px;height:25px;box-sizing:border-box;border:1px solid #e3e3e3;border-radius:3px;background:#fff"></div>
<svg class="r" style="left:498.5px;top:348.7px" width="25" height="25" viewBox="0 0 25 25"><path d="M6.5 6 H13.5 L16.6 9 V19.4 H6.5 Z" fill="#a28ef2"/><path d="M13.5 10.6 H17" stroke="#6f4fd8" stroke-width="1"/><circle cx="16.6" cy="16" r="3.6" fill="#0b84e6"/><rect x="15.3" y="14.8" width="2.6" height="2.5" fill="#fff"/></svg>
<div class="t" style="left:528.70px;top:357.90px;font-size:8.5px;color:#333;">Failed Request Tracing</div>
<div class="r" style="left:657.2px;top:348.7px;width:25px;height:25px;box-sizing:border-box;border:1px solid #e3e3e3;border-radius:3px;background:#fff"></div>
<svg class="r" style="left:657.2px;top:348.7px" width="25" height="25" viewBox="0 0 25 25"><defs><linearGradient id="seog" x1="0" y1="0" x2="0" y2="1"><stop offset="0" stop-color="#e32a3f"/><stop offset="1" stop-color="#b3186a"/></linearGradient></defs><rect x="5.4" y="5.8" width="14.4" height="14" rx="1" fill="url(#seog)"/><path d="M7 7 V18.6 H18.6" stroke="#fff" stroke-width="0.8" fill="none"/><path d="M8.6 17 L17 8.4" stroke="#fff" stroke-width="0.9"/><path d="M15 7.9 L17.6 7.5 L17.2 10.1 Z" fill="#fff"/><path d="M11.2 18.2 V15.2 M13.5 18.2 V12.8 M15.8 18.2 V10.6" stroke="#fff" stroke-width="0.8"/></svg>
<div class="t" style="left:687.40px;top:357.90px;font-size:8.5px;color:#333;">SEO</div>
<div class="r" style="left:339.5px;top:383.3px;width:25px;height:25px;box-sizing:border-box;border:1px solid #e3e3e3;border-radius:3px;background:#fff"></div>
<svg class="r" style="left:339.5px;top:383.3px" width="25" height="25" viewBox="0 0 25 25"><circle cx="11.3" cy="11.3" r="6" fill="#1e96ee"/><path d="M8 7 Q10.5 9 9 11.5 Q7 13 8.5 16 M12 6 Q13.5 9 15.5 9.5 M13 13 Q14 15.5 12.5 17" stroke="#52c8f8" stroke-width="1.6" fill="none"/><circle cx="16.3" cy="16.5" r="3.8" fill="#48b30c"/><circle cx="16.3" cy="16.5" r="2.6" fill="#7ad12d"/><path d="M14.5 16.5 H18 M16.8 15 L18.2 16.5 L16.8 18" stroke="#fff" stroke-width="1.3" fill="none"/></svg>
<div class="t" style="left:369.70px;top:392.50px;font-size:8.5px;color:#333;">Website Importing</div>
<div class="r" style="left:498.5px;top:383.3px;width:25px;height:25px;box-sizing:border-box;border:1px solid #e3e3e3;border-radius:3px;background:#fff"></div>
<svg class="r" style="left:498.5px;top:383.3px" width="25" height="25" viewBox="0 0 25 25"><path d="M8.6 7.5 H16.6 Q18 7.5 18 9 V11.5 H7.2 V9 Q7.2 7.5 8.6 7.5 Z" fill="#64c90d"/><rect x="8.7" y="11.5" width="8" height="1.4" fill="#fff"/><rect x="8.5" y="13.2" width="10" height="6.7" rx="0.7" fill="#5a6f95"/><rect x="10" y="16.3" width="3.3" height="1.6" fill="#e5ecf6"/><path d="M6.8 10.2 L8.8 11.5 M18.4 10.2 L16.6 11.5" stroke="#aab4e6" stroke-width="0.8"/></svg>
<div class="t" style="left:528.70px;top:386.70px;font-size:8.5px;color:#333;">Create Website</div>
<div class="t" style="left:528.70px;top:399.12px;font-size:7.3px;color:#777;">CMS, Builders, and more</div>
<div class="t" style="left:339.70px;top:427.36px;font-size:9.5px;color:#222;font-weight:bold;">Security</div>
<div class="r" style="left:339.5px;top:449.2px;width:25px;height:25px;box-sizing:border-box;border:1px solid #e3e3e3;border-radius:3px;background:#fff"></div>
<svg class="r" style="left:339.5px;top:449.2px" width="25" height="25" viewBox="0 0 25 25"><path d="M9.4 10 V8.9 Q9.4 5.4 13.1 5.4 Q16.8 5.4 16.8 8.9 V10" stroke="#3a4f70" stroke-width="1.5" fill="none"/><rect x="7.1" y="9.7" width="12.3" height="10.1" rx="0.8" fill="#f8bf1c"/><circle cx="11" cy="13.6" r=".65" fill="#5a3a00"/><circle cx="15.4" cy="13.6" r=".65" fill="#5a3a00"/><path d="M11.8 15.6 Q13.2 17.6 14.6 15.6 Z" fill="#d81818"/><path d="M6.6 19.6 Q6.2 16.8 8.2 15.2 Q9 16.4 10 16.8 Q10.4 18.4 10 19.8 Z" fill="#ee8512"/></svg>
<div class="t" style="left:369.70px;top:452.40px;font-size:8.5px;color:#333;">SSL/TLS Certificates</div>
<div class="r" style="left:369.7px;top:463.9px;width:77.7px;height:9px;background:#fdf0e3;border-radius:1px"></div>
<div class="t" style="left:371.40px;top:464.75px;font-size:7.5px;color:#e0701a;font-weight:bold;">Webmail not secured</div>
<div class="r" style="left:498.5px;top:449.2px;width:25px;height:25px;box-sizing:border-box;border:1px solid #e3e3e3;border-radius:3px;background:#fff"></div>
<svg class="r" style="left:498.5px;top:449.2px" width="25" height="25" viewBox="0 0 25 25"><path d="M5.2 6.9 H10.8 L12 8.2 H19.7 V18.9 H5.2 Z" fill="#7a66e4"/><rect x="5.2" y="9" width="14.5" height="9.9" fill="#a797f4"/><rect x="6.4" y="9.6" width="12" height="0.9" fill="#e9e4ff"/><path d="M10.8 13.5 V12.8 Q10.8 11.3 12.4 11.3 Q14 11.3 14 12.8 V13.5" stroke="#f1eeff" stroke-width="0.9" fill="none"/><rect x="10.3" y="13.5" width="4.3" height="3.4" rx=".5" fill="none" stroke="#f1eeff" stroke-width="0.9"/></svg>
<div class="t" style="left:528.70px;top:452.10px;font-size:8.5px;color:#333;">Password-Protected</div>
<div class="t" style="left:528.70px;top:463.70px;font-size:8.5px;color:#333;">Directories</div>
<div class="r" style="left:657.2px;top:449.2px;width:25px;height:25px;box-sizing:border-box;border:1px solid #e3e3e3;border-radius:3px;background:#fff"></div>
<svg class="r" style="left:657.2px;top:449.2px" width="25" height="25" viewBox="0 0 25 25"><g transform="translate(0,-1.4)"><path d="M12.2 6.9 Q15.5 7.7 19.2 8.5 Q19.5 17.5 12.3 21.5 Q5 17.5 5.4 8.5 Q9 7.7 12.2 6.9 Z" fill="#24aaf3"/><path d="M10.3 15.8 L14.2 11.9" stroke="#d6f1ff" stroke-width="0.9"/><rect x="9" y="13.6" width="3.4" height="4.6" rx="1.6" transform="rotate(45 10.7 15.9)" fill="none" stroke="#d6f1ff" stroke-width="0.9"/><rect x="12.3" y="10.1" width="3.4" height="4.6" rx="1.6" transform="rotate(45 14 12.4)" fill="none" stroke="#d6f1ff" stroke-width="0.9"/></g></svg>
<div class="t" style="left:687.40px;top:458.40px;font-size:8.5px;color:#333;">Hotlink Protection</div>
<div class="r" style="left:339.5px;top:484.2px;width:25px;height:25px;box-sizing:border-box;border:1px solid #e3e3e3;border-radius:3px;background:#fff"></div>
<svg class="r" style="left:339.5px;top:484.2px" width="25" height="25" viewBox="0 0 25 25"><g transform="translate(12.4,12.3) scale(1.12) translate(-12.3,-14)"><path d="M9.3 8.4 Q12.2 6.7 15 8.4 L15 9.5 H9.3 Z" fill="#3a4e75"/><ellipse cx="12.2" cy="13.4" rx="4.2" ry="4.4" fill="#27a6ef"/><circle cx="10.6" cy="12.8" r="1.3" fill="#f19a7e"/><circle cx="13.8" cy="12.8" r="1.3" fill="#f19a7e"/><path d="M12 14 L12.6 15.4" stroke="#667a11" stroke-width="0.9"/><rect x="8.8" y="15.5" width="7" height="4.3" rx="2" fill="#2f8ee8"/><ellipse cx="12.3" cy="17.8" rx="2.2" ry="1.6" fill="#fdd3a2"/><rect x="10.4" y="19.6" width="1.2" height="1.4" fill="#f29f0d"/><rect x="12.9" y="19.6" width="1.2" height="1.4" fill="#f29f0d"/></g></svg>
<div class="t" style="left:369.70px;top:493.40px;font-size:8.5px;color:#333;">Advisor</div>
<div class="t" style="left:369.60px;top:295.32px;font-size:7.3px;color:#777;">Version 7.4.33</div>
<div class="r" style="left:419.3px;top:294.4px;width:35.2px;height:9px;background:#fde9ee;border-radius:1px"></div>
<div class="t" style="left:421.00px;top:295.15px;font-size:7.5px;color:#d2234f;font-weight:bold;">outdated</div>
<div class="r" style="left:157.7px;top:526px;width:1016px;height:1px;background:#e6e6e6"></div>
<div class="t" style="left:157.70px;top:532.95px;font-size:7.5px;color:#666;">Website at</div>
<div class="t" style="left:194.70px;top:532.95px;font-size:7.5px;color:#1e88c7;">httpdocs</div>
<div class="t" style="left:235.90px;top:532.95px;font-size:7.5px;color:#666;">IP address</div>
<div class="t" style="left:327.30px;top:532.95px;font-size:7.5px;color:#666;">System user</div>
<div class="t" style="left:1121.30px;top:532.95px;font-size:7.5px;color:#1e88c7;letter-spacing:0.05px;">Add description</div>
</body></html>
